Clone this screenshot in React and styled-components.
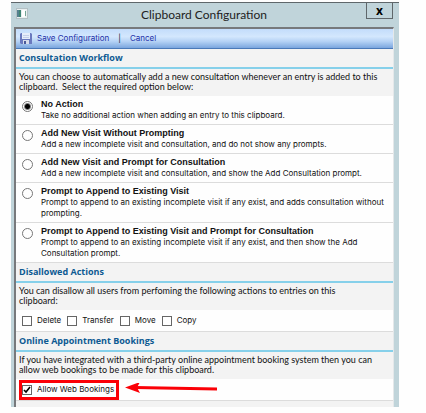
import React, { useState } from "react";
import styled, { createGlobalStyle } from "styled-components";

const GlobalStyle = createGlobalStyle`
  * {
    box-sizing: border-box;
  }

  body {
    margin: 0;
    background: #fefefe;
    color: #111;
    font-family: Inter, "Liberation Sans", Arial, sans-serif;
    font-size: 8px;
    line-height: 11px;
  }
`;

const Page = styled.div`
  padding: 2px 27px 7px 11px;
`;

const Dialog = styled.section`
  padding: 0 5px 0 3px;
  background: #c0d4da;
  border-top: 1px solid #5f676b;
`;

const TitleBar = styled.header`
  display: grid;
  grid-template-columns: 28px 1fr 28px;
  align-items: start;
  height: 24px;

  > svg {
    margin: 5px 0 0 2px;
  }
`;

const Title = styled.h1`
  margin: 0;
  font-family: Lato, "Open Sans", sans-serif;
  font-size: 12px;
  font-weight: 400;
  line-height: 24px;
  text-align: center;
  color: #222;
`;

const CloseButton = styled.button`
  width: 27px;
  height: 16px;
  padding: 0;
  border: 1px solid #5f676b;
  border-top: none;
  background: transparent;
  color: #000;
  font-family: "Noto Sans", sans-serif;
  font-size: 12px;
  font-weight: 700;
  line-height: 13px;
`;

const Panel = styled.div`
  border: solid #77797c;
  border-width: 2px 0 0 2px;
  border-right: 1px solid #e4e8ea;
  background: #fefefe;
`;

const Toolbar = styled.nav`
  display: flex;
  align-items: center;
  height: 20px;
  padding: 0 4px;
  background: linear-gradient(#c3dcfb, #d3e7fd 40%, #b5d2f5 65%, #7ba6de);
  border-bottom: 1px solid #4a79b8;
`;

const ToolbarButton = styled.button`
  display: flex;
  align-items: center;
  gap: 5px;
  padding: 0;
  border: none;
  background: transparent;
  color: #1c2fa8;
  font-family: inherit;
  font-size: 8px;
  line-height: 11px;
`;

const Divider = styled.span`
  margin: 0 9px;
  color: #222;
`;

const SectionTitle = styled.h2`
  height: 20px;
  margin: 0;
  padding-left: 3px;
  background: #f3f3f3;
  border-bottom: 2px solid #86d0ea;
  color: #0d5a92;
  font-family: "Open Sans", "Noto Sans", sans-serif;
  font-size: 9px;
  font-weight: 700;
  line-height: 18px;
`;

const Intro = styled.p`
  margin: 0;
  padding: 3px 2px 4px 3px;
  background: #f3f3f3;
  font-family: Lato, "Open Sans", sans-serif;
  font-size: 9px;
  line-height: 10px;
`;

const Option = styled.label`
  display: flex;
  gap: 8px;
  padding: 3px 4px;
  border-bottom: 1px solid #dcdcdc;
`;

const OptionText = styled.span`
  flex: 1;
`;

const OptionTitle = styled.strong`
  display: block;
  font-family: "Liberation Sans", Arial, sans-serif;
  font-size: 9px;
`;

const Radio = styled.input`
  appearance: none;
  flex: none;
  width: 11px;
  height: 11px;
  margin: 2px 0 0 2px;
  border: 1px solid #777;
  border-radius: 50%;
  background: #fff;

  &:checked {
    background: radial-gradient(circle, #000 0 2px, #fff 4px);
  }
`;

const CheckRow = styled.div`
  display: flex;
  align-items: center;
  gap: 6px;
  height: 22px;
  padding: 0 2px 0 6px;
  border-bottom: 1px solid #dcdcdc;
`;

const HighlightRow = styled(CheckRow)`
  padding-left: 3px;
`;

const CheckLabel = styled.label`
  display: flex;
  align-items: center;
  gap: 5px;
`;

const HighlightedLabel = styled(CheckLabel)`
  height: 20px;
  padding-right: 2px;
  border: 3px solid #fb0007;
  white-space: nowrap;
`;

const Checkbox = styled.input`
  appearance: none;
  flex: none;
  width: 10px;
  height: 10px;
  margin: 0;
  border: 1px solid #666;
  background: #fff;

  &:checked {
    background: #fff
      url("data:image/svg+xml,%3Csvg xmlns='http://www.w3.org/2000/svg' viewBox='0 0 8 8'%3E%3Cpath d='M1 4l2 2 4-5' fill='none' stroke='black' stroke-width='1.6'/%3E%3C/svg%3E")
      center / 8px 8px;
  }
`;

const Footer = styled.div`
  height: 6px;
  background: #f3f3f3;
`;

const options = [
  {
    id: "none",
    title: "No Action",
    text: "Take no additional action when adding an entry to this clipboard.",
  },
  {
    id: "add",
    title: "Add New Visit Without Prompting",
    text: "Add a new incomplete visit and consultation, and do not show any prompts.",
  },
  {
    id: "add-prompt",
    title: "Add New Visit and Prompt for Consultation",
    text: "Add a new incomplete visit and consultation, and show the Add Consultation prompt.",
  },
  {
    id: "append",
    title: "Prompt to Append to Existing Visit",
    text: "Prompt to append to an existing incomplete visit if any exist, and adds consultation without prompting.",
  },
  {
    id: "append-prompt",
    title: "Prompt to Append to Existing Visit and Prompt for Consultation",
    text: "Prompt to append to an existing incomplete visit if any exist, and then show the Add Consultation prompt.",
  },
];

const actions = ["Delete", "Transfer", "Move", "Copy"];

const WindowIcon = () => (
  <svg width="12" height="11" viewBox="0 0 12 11" aria-hidden="true">
    <rect x="0.5" y="0.5" width="11" height="10" fill="#e9eff0" stroke="#b3c0c4" />
    <rect x="1" y="2" width="4" height="7" fill="#3f8573" />
    <rect x="1" y="2" width="2" height="7" fill="#56818f" />
    <rect x="6" y="2" width="3" height="7" fill="#fff" />
    <rect x="9" y="3" width="1" height="5" fill="#75a394" />
  </svg>
);

const SaveIcon = () => (
  <svg width="12" height="12" viewBox="0 0 12 12" aria-hidden="true">
    <path d="M1 0h10l1 1v10H1L0 10V1z" fill="#6a79bf" />
    <rect x="2" y="0" width="8" height="6" fill="#e6edfa" />
    <path d="M3 2.5h6M3 4.5h6" stroke="#c3cee8" />
    <rect x="3" y="7" width="6" height="4" fill="#d6dcea" />
    <rect x="4" y="8" width="2" height="3" fill="#4a5999" />
  </svg>
);

const Arrow = () => (
  <svg width="93" height="13" viewBox="0 0 93 13" aria-hidden="true">
    <path d="M10 4.5L92 6" stroke="#fb0007" strokeWidth="3" fill="none" />
    <path d="M0 4.5L15 -1L12 4.5L15 10z" fill="#fb0007" />
  </svg>
);

function App() {
  const [workflow, setWorkflow] = useState("none");
  const [disallowed, setDisallowed] = useState([]);
  const [webBookings, setWebBookings] = useState(true);

  const toggleAction = (name) => {
    setDisallowed(
      disallowed.includes(name)
        ? disallowed.filter((x) => x !== name)
        : [...disallowed, name]
    );
  };

  return (
    <Page>
      <GlobalStyle />
      <Dialog>
        <TitleBar>
          <WindowIcon />
          <Title>Clipboard Configuration</Title>
          <CloseButton aria-label="Close">x</CloseButton>
        </TitleBar>
        <Panel>
          <Toolbar>
            <ToolbarButton>
              <SaveIcon />
              Save Configuration
            </ToolbarButton>
            <Divider>|</Divider>
            <ToolbarButton>Cancel</ToolbarButton>
          </Toolbar>

          <SectionTitle>Consultation Workflow</SectionTitle>
          <Intro>
            You can choose to automatically add a new consultation whenever an
            entry is added to this clipboard.&nbsp; Select the required option
            below:
          </Intro>
          {options.map((option) => (
            <Option key={option.id}>
              <Radio
                type="radio"
                name="workflow"
                checked={workflow === option.id}
                onChange={() => setWorkflow(option.id)}
              />
              <OptionText>
                <OptionTitle>{option.title}</OptionTitle>
                {option.text}
              </OptionText>
            </Option>
          ))}

          <SectionTitle>Disallowed Actions</SectionTitle>
          <Intro>
            You can disallow all users from perfoming the following actions to
            entries on this
            <br />
            clipboard:
          </Intro>
          <CheckRow>
            {actions.map((name) => (
              <CheckLabel key={name}>
                <Checkbox
                  type="checkbox"
                  checked={disallowed.includes(name)}
                  onChange={() => toggleAction(name)}
                />
                {name}
              </CheckLabel>
            ))}
          </CheckRow>

          <SectionTitle>Online Appointment Bookings</SectionTitle>
          <Intro>
            If you have integrated with a third-party online appointment booking
            system then you can
            <br />
            allow web bookings to be made for this clipboard.
          </Intro>
          <HighlightRow>
            <HighlightedLabel>
              <Checkbox
                type="checkbox"
                checked={webBookings}
                onChange={(e) => setWebBookings(e.target.checked)}
              />
              Allow Web Bookings
            </HighlightedLabel>
            <Arrow />
          </HighlightRow>
          <Footer />
        </Panel>
      </Dialog>
    </Page>
  );
}

export default App;
